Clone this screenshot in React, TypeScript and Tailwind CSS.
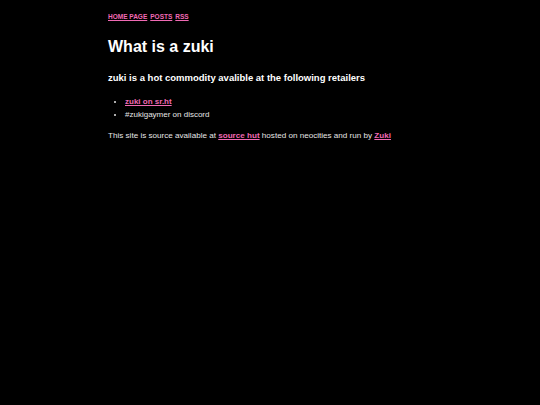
export default function App() {
  return (
    <div className="min-h-[405px] bg-black text-[#e6e6e6] font-['Liberation_Sans',Arial,sans-serif]">
      <div className="pl-[108px] pt-[12px]">
        <nav className="flex gap-[3px] text-[6.5px] font-bold leading-[9px]">
          <a href="#" className="text-[#f06ab4] underline">HOME PAGE</a>
          <a href="#" className="text-[#f06ab4] underline">POSTS</a>
          <a href="#" className="text-[#f06ab4] underline">RSS</a>
        </nav>
        <h1 className="mt-[16px] text-[16px] font-bold leading-[20px] text-white">What is a zuki</h1>
        <h2 className="mt-[15px] text-[9.5px] font-bold leading-[12px] text-white">
          zuki is a hot commodity avalible at the following retailers
        </h2>
        <ul className="mt-[11px] list-disc pl-[17px] text-[8px] leading-[13px]">
          <li>
            <a href="#" className="font-bold text-[#f06ab4] underline">zuki on sr.ht</a>
          </li>
          <li>#zukigaymer on discord</li>
        </ul>
        <p className="mt-[10px] text-[8.1px] leading-[10px]">
          This site is source available at{' '}
          <a href="#" className="font-bold text-[#f06ab4] underline">source hut</a> hosted on neocities and run by{' '}
          <a href="#" className="font-bold text-[#f06ab4] underline">Zuki</a>
        </p>
      </div>
    </div>
  );
}
